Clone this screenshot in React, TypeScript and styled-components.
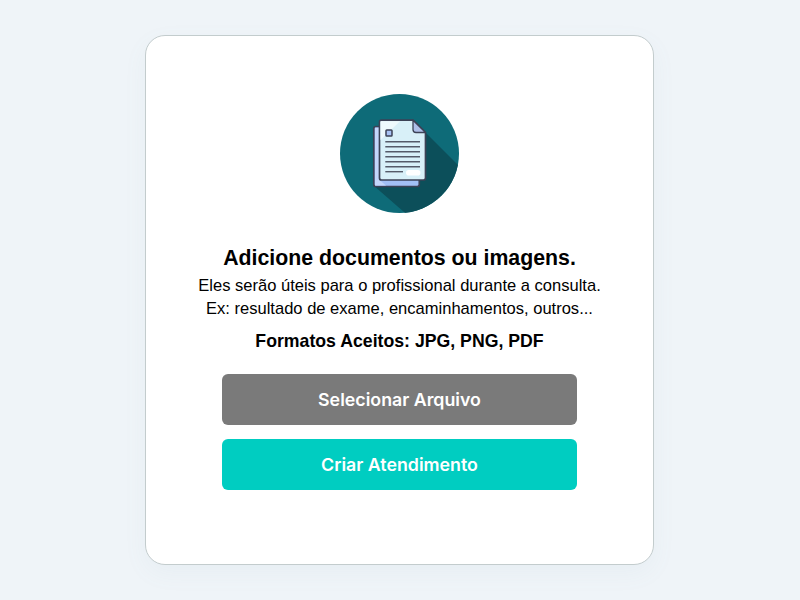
import React from "react";
import styled, { createGlobalStyle } from "styled-components";

const Global = createGlobalStyle`
  html, body { margin: 0; padding: 0; height: 100%; background: #eff4f8; }
  #root { height: 100%; }
`;

const Page = styled.main`
  box-sizing: border-box;
  width: 800px;
  height: 600px;
  padding-right: 1px;
  display: flex;
  align-items: center;
  justify-content: center;
  overflow: hidden;
  background: #eff4f8;
`;

const Card = styled.section`
  box-sizing: border-box;
  width: 509px;
  height: 530px;
  padding: 58px 0 0;
  display: flex;
  flex-direction: column;
  align-items: center;
  background: #fff;
  border: 1px solid #c3cccd;
  border-radius: 20px;
  box-shadow: 0 8px 24px rgba(120, 150, 170, 0.06);
`;

const Illustration = styled.svg`
  width: 120px;
  height: 120px;
  display: block;
  flex: none;
`;

const Title = styled.h1`
  margin: 31px 0 0;
  font: 700 21.3px/26px "Liberation Sans", Arial, sans-serif;
  color: #000;
  text-align: center;
`;

const Description = styled.p`
  margin: 3px 0 0;
  font: 400 16.55px/23px "Liberation Sans", Arial, sans-serif;
  color: #000;
  text-align: center;
`;

const Formats = styled.p`
  margin: 10px 0 0;
  font: 700 17.7px/22px "Liberation Sans", Arial, sans-serif;
  color: #000;
  text-align: center;
`;

const Actions = styled.div`
  margin-top: 22px;
  width: 355px;
  display: flex;
  flex-direction: column;
  gap: 14px;
`;

const ActionButton = styled.button<{ $tone: string }>`
  height: 51px;
  width: 100%;
  padding: 0;
  border: 0;
  border-radius: 6px;
  background: ${(p) => p.$tone};
  color: #fff;
  font: 600 17.8px/51px Inter, "Liberation Sans", sans-serif;
  text-align: center;
`;

const DocumentsIcon = () => (
  <Illustration viewBox="0 0 120 120" aria-hidden="true">
    <defs>
      <clipPath id="disc">
        <circle cx="59.5" cy="59.5" r="59.5" />
      </clipPath>
    </defs>
    <circle cx="59.5" cy="59.5" r="59.5" fill="#0e6b78" />
    <polygon
      clipPath="url(#disc)"
      points="85,38 130,83 130,125 72,125 35,92.7"
      fill="#0c4f5a"
    />
    <rect x="33.8" y="32.5" width="45.5" height="60" rx="2" fill="#a3bff5" stroke="#3c4256" strokeWidth="1.7" />
    <polygon points="35,34 39.5,34 39.5,86 46,91.6 35,91.6" fill="#c3d6fa" />
    <path
      d="M41.5 26.2 H73 L85.5 38.5 V84 a2 2 0 0 1 -2 2 H41.5 a2 2 0 0 1 -2 -2 V28.2 a2 2 0 0 1 2 -2 Z"
      fill="#d8f0f8"
      stroke="#3c4256"
      strokeWidth="1.7"
    />
    <polygon points="40.5,27.2 60,27.2 40.5,46" fill="#eefafd" />
    <path
      d="M73 26.2 V35.5 a3 3 0 0 0 3 3 H85.5 Z"
      fill="#aebfe8"
      stroke="#3c4256"
      strokeWidth="1.3"
      strokeLinejoin="round"
    />
    <rect x="46" y="36" width="6" height="6" rx="0.8" fill="#a9c3f5" stroke="#3c4256" strokeWidth="1.5" />
    <g stroke="#555a68" strokeWidth="1.4">
      <line x1="45.3" y1="47.7" x2="80" y2="47.7" />
      <line x1="45.3" y1="52.7" x2="80" y2="52.7" />
      <line x1="45.3" y1="57.7" x2="80" y2="57.7" />
      <line x1="45.3" y1="62.7" x2="80" y2="62.7" />
      <line x1="45.3" y1="67.7" x2="80" y2="67.7" />
      <line x1="45.3" y1="72.7" x2="80" y2="72.7" />
      <line x1="45.3" y1="77.7" x2="63" y2="77.7" />
    </g>
    <rect x="66" y="76" width="14.5" height="5.6" rx="2.8" fill="#fff" />
  </Illustration>
);

export default function App() {
  return (
    <>
      <Global />
      <Page>
        <Card>
          <DocumentsIcon />
          <Title>Adicione documentos ou imagens.</Title>
          <Description>
            Eles serão úteis para o profissional durante a consulta.
            <br />
            Ex: resultado de exame, encaminhamentos, outros...
          </Description>
          <Formats>Formatos Aceitos: JPG, PNG, PDF</Formats>
          <Actions>
            <ActionButton $tone="#7a7a7a">Selecionar Arquivo</ActionButton>
            <ActionButton $tone="#00cdc1">Criar Atendimento</ActionButton>
          </Actions>
        </Card>
      </Page>
    </>
  );
}
